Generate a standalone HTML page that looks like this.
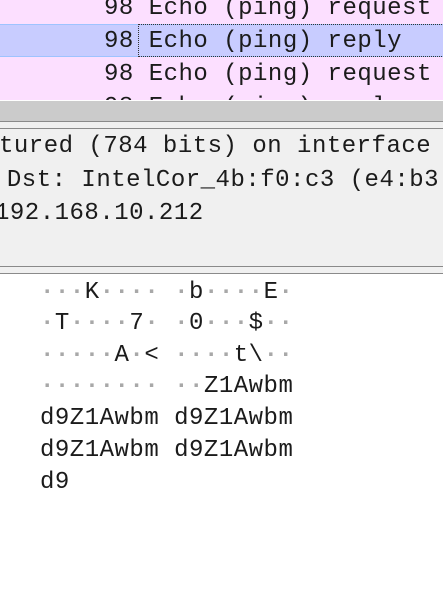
<!DOCTYPE html>
<html><head><style>
body{margin:0;width:443px;height:599px;overflow:hidden;background:#fff;position:relative;font-family:"Liberation Mono","DejaVu Sans Mono",monospace;font-size:24px;letter-spacing:0.5px;color:#1b1b1b}
.a{position:absolute;white-space:pre;line-height:32px}
.r{position:absolute;left:0;width:443px}
.d{color:#a8a8a8;font-weight:bold}
</style></head><body>
<div class="r" style="top:0;height:100px;background:#fcdfff;overflow:hidden">
 <div class="r" style="top:24px;height:33px;background:#c8ccff;border-top:1px solid #9ec3ff;border-bottom:1px solid #9ec3ff;box-sizing:border-box"></div>
 <div style="position:absolute;left:138px;top:24px;width:310px;height:33px;border:1px dotted #333;box-sizing:border-box"></div>
 <div class="a" style="left:104px;top:-7px">98 Echo (ping) request</div>
 <div class="a" style="left:104px;top:26px">98 Echo (ping) reply</div>
 <div class="a" style="left:104px;top:59px">98 Echo (ping) request</div>
 <div class="a" style="left:104px;top:92px">98 Echo (ping) reply</div>
</div>
<div class="r" style="top:100px;height:1px;background:#fff"></div>
<div class="r" style="top:101px;height:20px;background:#cbcbcb"></div>
<div class="r" style="top:121px;height:145px;background:#f0f0f0;overflow:hidden">
 <div class="r" style="top:0;height:1px;background:#8a8a8a"></div>
 <div class="r" style="top:7px;height:1px;background:#8a8a8a"></div>
 <div class="a" style="left:-1px;top:10px">tured (784 bits) on interface </div>
 <div class="a" style="left:-8px;top:44px"> Dst: IntelCor_4b:f0:c3 (e4:b3</div>
 <div class="a" style="left:-5px;top:77px">192.168.10.212</div>
</div>
<div class="r" style="top:266px;height:1px;background:#8a8a8a"></div>
<div class="r" style="top:267px;height:6px;background:#f0f0f0"></div>
<div class="r" style="top:273px;height:1px;background:#8a8a8a"></div>
<div class="a" style="left:40px;top:277px"><span class="d">···</span>K<span class="d">····</span> <span class="d">·</span>b<span class="d">····</span>E<span class="d">·</span></div>
<div class="a" style="left:40px;top:308px"><span class="d">·</span>T<span class="d">····</span>7<span class="d">·</span> <span class="d">·</span>0<span class="d">···</span>$<span class="d">··</span></div>
<div class="a" style="left:40px;top:340px"><span class="d">·····</span>A<span class="d">·</span>&lt; <span class="d">····</span>t\<span class="d">··</span></div>
<div class="a" style="left:40px;top:371px"><span class="d">········</span> <span class="d">··</span>Z1Awbm</div>
<div class="a" style="left:40px;top:403px">d9Z1Awbm d9Z1Awbm</div>
<div class="a" style="left:40px;top:435px">d9Z1Awbm d9Z1Awbm</div>
<div class="a" style="left:40px;top:467px">d9</div>
</body></html>
